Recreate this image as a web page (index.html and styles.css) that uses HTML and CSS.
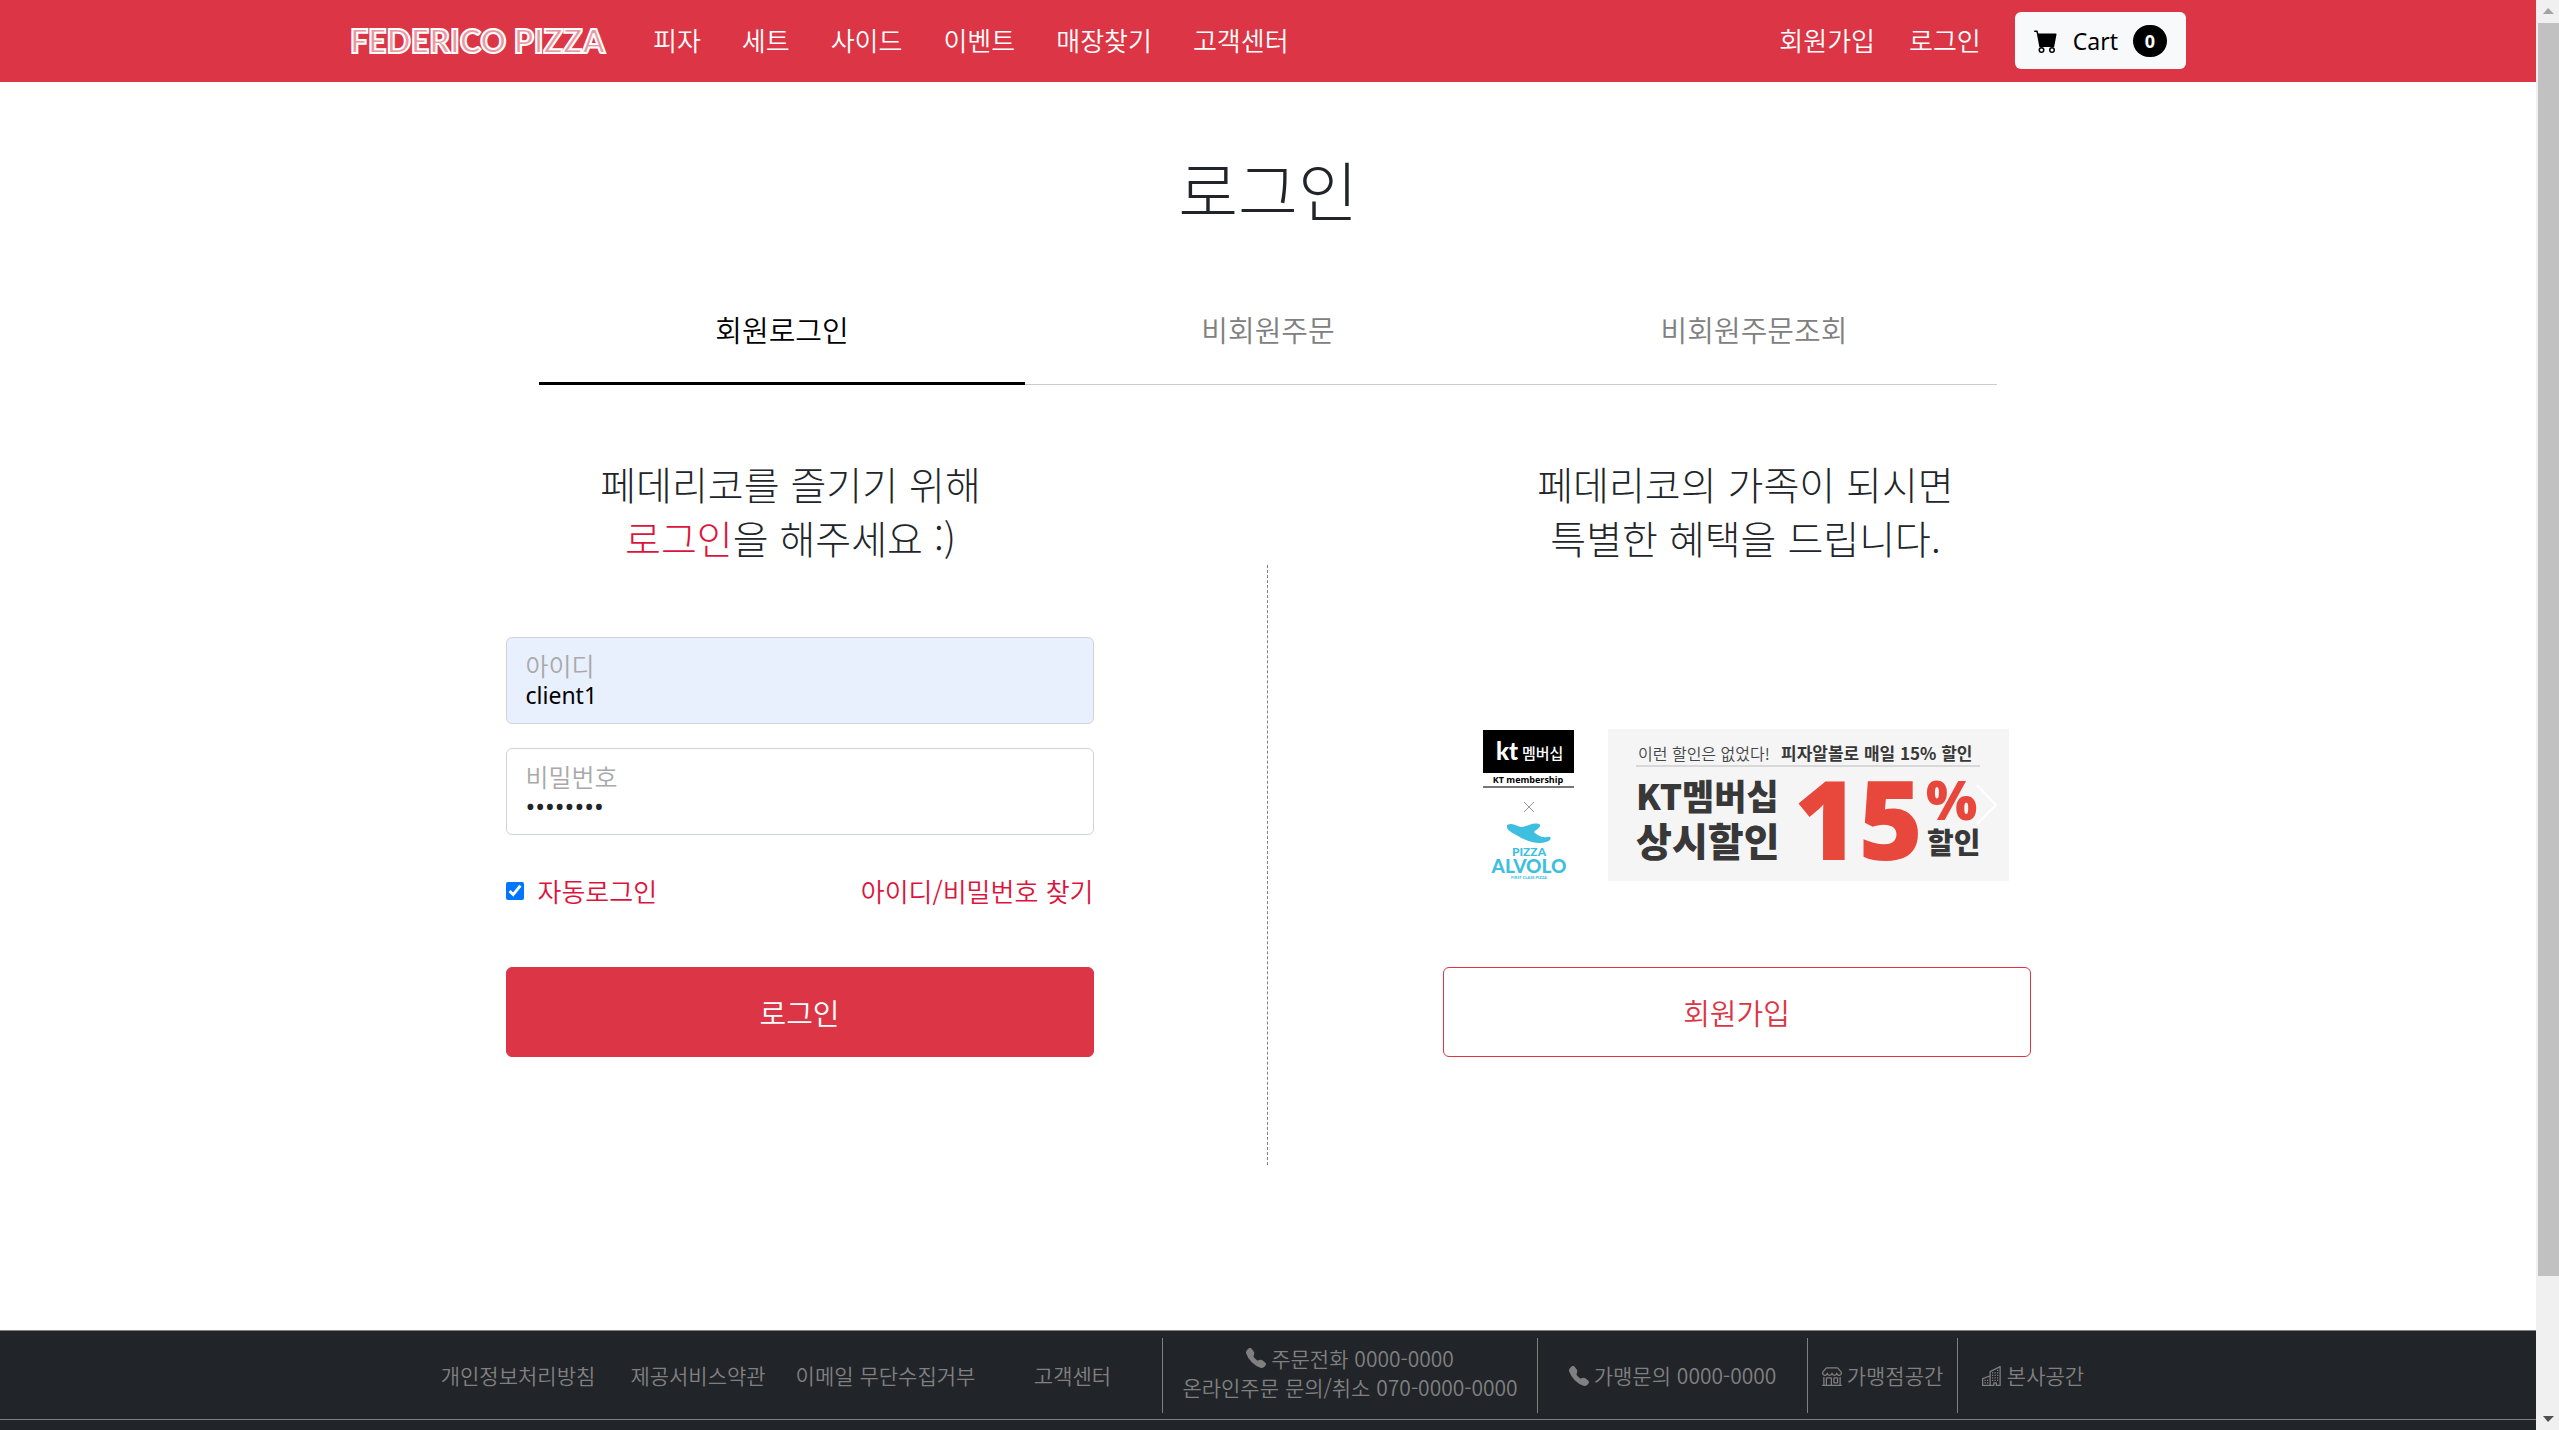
FILE: index.html
```html
<!DOCTYPE html>
<html lang="ko">
<head>
<meta charset="utf-8">
<title>FEDERICO PIZZA</title>
<link rel="stylesheet" href="styles.css">
</head>
<body>
<svg class="sprite" aria-hidden="true">
  <symbol id="phone" viewBox="0 0 16 16"><path fill-rule="evenodd" d="M1.885.511a1.745 1.745 0 0 1 2.61.163L6.29 2.98c.329.423.445.974.315 1.494l-.547 2.19a.678.678 0 0 0 .178.643l2.457 2.457a.678.678 0 0 0 .644.178l2.189-.547a1.745 1.745 0 0 1 1.494.315l2.306 1.794c.829.645.905 1.87.163 2.611l-1.034 1.034c-.74.74-1.846 1.065-2.877.702a18.634 18.634 0 0 1-7.01-4.42 18.634 18.634 0 0 1-4.42-7.009c-.362-1.03-.037-2.137.703-2.877L1.885.511z"/></symbol>
  <symbol id="shop" viewBox="0 0 16 16"><path d="M2.97 1.35A1 1 0 0 1 3.73 1h8.54a1 1 0 0 1 .76.35l2.609 3.044A1.5 1.5 0 0 1 16 5.37v.255a2.375 2.375 0 0 1-4.25 1.458A2.371 2.371 0 0 1 9.875 8 2.37 2.37 0 0 1 8 7.083 2.37 2.37 0 0 1 6.125 8a2.37 2.37 0 0 1-1.875-.917A2.375 2.375 0 0 1 0 5.625V5.37a1.5 1.5 0 0 1 .361-.976l2.61-3.045zm1.78 4.275a1.375 1.375 0 0 0 2.75 0 .5.5 0 0 1 1 0 1.375 1.375 0 0 0 2.75 0 .5.5 0 0 1 1 0 1.375 1.375 0 1 0 2.75 0V5.37a.5.5 0 0 0-.12-.325L12.27 2H3.73L1.12 5.045A.5.5 0 0 0 1 5.37v.255a1.375 1.375 0 0 0 2.75 0 .5.5 0 0 1 1 0zM1.5 8.5A.5.5 0 0 1 2 9v6h1v-5a1 1 0 0 1 1-1h3a1 1 0 0 1 1 1v5h6V9a.5.5 0 0 1 1 0v6h.5a.5.5 0 0 1 0 1H.5a.5.5 0 0 1 0-1H1V9a.5.5 0 0 1 .5-.5zM4 15h3v-5H4v5zm5-5a1 1 0 0 1 1-1h2a1 1 0 0 1 1 1v3a1 1 0 0 1-1 1h-2a1 1 0 0 1-1-1v-3zm3 0h-2v3h2v-3z"/></symbol>
  <symbol id="building" viewBox="0 0 16 16"><path fill-rule="evenodd" d="M14.763.075A.5.5 0 0 1 15 .5v15a.5.5 0 0 1-.5.5h-3a.5.5 0 0 1-.5-.5V14h-1v1.500a.5.5 0 0 1-.5.5h-9a.5.5 0 0 1-.5-.5V10a.5.5 0 0 1 .342-.474L6 7.640V4.500a.5.5 0 0 1 .276-.447l8-4a.5.5 0 0 1 .487.022zM6 8.694 1 10.360V15h5V8.694zM7 15h2v-1.500a.5.5 0 0 1 .5-.5h2a.5.5 0 0 1 .5.5V15h2V1.309l-7 3.500V15z"/><path d="M2 11h1v1H2v-1zm2 0h1v1H4v-1zm-2 2h1v1H2v-1zm2 0h1v1H4v-1zm4-4h1v1H8V9zm2 0h1v1h-1V9zm-2 2h1v1H8v-1zm2 0h1v1h-1v-1zm2-2h1v1h-1V9zm0 2h1v1h-1v-1zM8 7h1v1H8V7zm2 0h1v1h-1V7zm2 0h1v1h-1V7zM8 5h1v1H8V5zm2 0h1v1h-1V5zm2 0h1v1h-1V5zm0-2h1v1h-1V3z"/></symbol>
  <symbol id="cart" viewBox="0 0 16 16"><path d="M0 1.500A.5.5 0 0 1 .5 1H2a.5.5 0 0 1 .485.379L2.890 3H14.500a.5.5 0 0 1 .491.592l-1.500 8A.5.5 0 0 1 13 12H4a.5.5 0 0 1-.491-.408L2.010 3.607 1.610 2H.5a.5.5 0 0 1-.5-.5zM5 12a2 2 0 1 0 0 4 2 2 0 0 0 0-4zm7 0a2 2 0 1 0 0 4 2 2 0 0 0 0-4zm-7 1a1 1 0 1 1 0 2 1 1 0 0 1 0-2zm7 0a1 1 0 1 1 0 2 1 1 0 0 1 0-2z"/></symbol>
</svg>

<div class="page">
  <header class="topbar">
    <div class="topbar-inner">
      <a class="brand" href="#">FEDERICO PIZZA</a>
      <nav class="menu">
        <a href="#">피자</a><a href="#">세트</a><a href="#">사이드</a><a href="#">이벤트</a><a href="#">매장찾기</a><a href="#">고객센터</a>
      </nav>
      <nav class="account">
        <a href="#">회원가입</a><a href="#">로그인</a>
      </nav>
      <button class="cart" type="button"><svg class="cart-icon"><use href="#cart"/></svg>Cart<span class="badge">0</span></button>
    </div>
  </header>

  <main>
    <h1>로그인</h1>
    <div class="tabs">
      <button class="tab active" type="button">회원로그인</button>
      <button class="tab" type="button">비회원주문</button>
      <button class="tab" type="button">비회원주문조회</button>
    </div>

    <div class="columns">
      <section class="column">
        <h2 class="member-title">페데리코를 즐기기 위해<br><span class="accent">로그인</span>을 해주세요 :)</h2>
        <form class="login">
          <div class="field filled">
            <label for="user">아이디</label>
            <input id="user" type="text" value="client1">
          </div>
          <div class="field">
            <label for="pass">비밀번호</label>
            <input id="pass" type="password" value="password">
          </div>
          <div class="options">
            <input id="auto" type="checkbox" checked>
            <label for="auto">자동로그인</label>
            <a href="#">아이디/비밀번호 찾기</a>
          </div>
          <button class="action solid" type="button">로그인</button>
        </form>
      </section>
      <div class="divider"></div>
      <section class="column">
        <h2 class="join-title">페데리코의 가족이 되시면<br>특별한 혜택을 드립니다.</h2>
        <div class="promo">
          <svg class="banner" viewBox="0 0 527 152" role="img" aria-label="KT멤버십 상시할인 15%">
            <rect x="1" y="1" width="91" height="43"/>
            <text class="kt" x="14" y="31">kt</text>
            <text class="kt-sub" x="40" y="30">멤버십</text>
            <text class="kt-name" x="46" y="54">KT membership</text>
            <path class="rule" d="M1 58h91"/>
            <path class="thin" d="M42 73l10 10M52 73l-10 10"/>
            <path class="sky" d="M25 96c6-3 9 1 14 2 6 0 11-5 18-3 4 2-3 6-5 8 3 3 8 6 13 5 6-1 4 4-1 5-8 3-20-1-28-6-7-4-12-6-11-11z"/>
            <text class="sky pizza" x="47" y="127">PIZZA</text>
            <text class="sky alvolo" x="47" y="144">ALVOLO</text>
            <text class="sky tiny" x="47" y="150">FIRST CLASS PIZZA</text>
            <rect class="panel" x="126" width="401" height="152"/>
            <text class="lead" x="156" y="31">이런 할인은 없었다!</text>
            <text class="lead strong" x="299" y="31">피자알볼로 매일 15% 할인</text>
            <path class="hair" d="M154 37h344"/>
            <text class="big" x="154" y="81">KT멤버십</text>
            <text class="big wide" x="154" y="127">상시할인</text>
            <text class="red fifteen" x="312" y="131">15</text>
            <text class="red percent" x="444" y="91">%</text>
            <text class="sale" x="445" y="125">할인</text>
            <path class="chevron" d="M495 56l19 20-19 19"/>
          </svg>
        </div>
        <button class="action outline" type="button">회원가입</button>
      </section>
    </div>
  </main>

  <footer>
    <div class="links">
      <a href="#">개인정보처리방침</a>
      <a href="#">제공서비스약관</a>
      <a href="#">이메일 무단수집거부</a>
      <a href="#">고객센터</a>
      <div class="cell stacked"><span class="line"><svg class="icon"><use href="#phone"/></svg>주문전화 0000-0000</span><span class="line">온라인주문 문의/취소 070-0000-0000</span></div>
      <div class="cell"><span class="line"><svg class="icon"><use href="#phone"/></svg>가맹문의 0000-0000</span></div>
      <div class="cell"><a class="line" href="#"><svg class="icon"><use href="#shop"/></svg>가맹점공간</a></div>
      <div class="cell"><a class="line" href="#"><svg class="icon"><use href="#building"/></svg>본사공간</a></div>
    </div>
  </footer>
</div>

<div class="scrollbar" aria-hidden="true">
  <svg class="arrow" viewBox="0 0 23 23"><path fill="#a3a3a3" d="M7 14l5-6 6 6z"/></svg>
  <div class="track"><div class="thumb"></div></div>
  <svg class="arrow" viewBox="0 0 23 23"><path fill="#505050" d="M7 9h11l-6 6z"/></svg>
</div>
</body>
</html>
```
FILE: styles.css
```css
* { box-sizing: border-box; }

body {
  margin: 0;
  height: 100vh;
  display: grid;
  grid-template-columns: 1fr 23px;
  overflow: hidden;
  font-family: "Noto Sans CJK KR", "Noto Sans", sans-serif;
  font-weight: 350;
  font-size: 26px;
  color: #212529;
  background: #fff;
}
a { color: inherit; text-decoration: none; }
button, input { font: inherit; }
h1, h2 { margin: 0; font-weight: 300; text-align: center; }

.sprite { position: absolute; width: 0; height: 0; }
.page { height: 100vh; overflow: hidden; }

/* top bar */
.topbar { background: #dc3545; color: #fff; }
.topbar-inner {
  max-width: 1836px;
  height: 82px;
  margin: 0 auto;
  display: flex;
  align-items: center;
}
.brand {
  width: 303px;
  font-family: Lato, sans-serif;
  font-weight: 900;
  font-size: 32px;
  line-height: 40px;
  white-space: nowrap;
  color: #eb96a0;
  -webkit-text-stroke: 2px #fff;
}
.menu { display: flex; gap: 41px; flex: 1; padding-bottom: 4px; }
.account { display: flex; gap: 34px; margin-right: 34px; padding-bottom: 4px; }
.cart {
  display: flex;
  align-items: center;
  height: 57px;
  margin-bottom: 1px;
  padding: 0 19px;
  border: 0;
  border-radius: 6px;
  background: #f8f9fa;
  color: #000;
  font-family: "Noto Sans", sans-serif;
  font-weight: 400;
  font-size: 23px;
}
.cart-icon { width: 24px; height: 24px; margin-right: 15px; }
.badge {
  width: 34px;
  margin-left: 15px;
  border-radius: 16px;
  background: #000;
  color: #fff;
  font-weight: 700;
  font-size: 18px;
  line-height: 32px;
  text-align: center;
}

/* heading and tabs */
h1 { padding-top: 66px; font-size: 65px; line-height: 80px; }
.tabs {
  max-width: 1458px;
  margin: 47px auto 71px;
  display: grid;
  grid-template-columns: repeat(3, 1fr);
  box-shadow: inset 0 -1px #ccc;
}
.tab {
  height: 110px;
  padding: 0 0 2px;
  border: 0;
  background: none;
  color: gray;
  font-size: 29px;
}
.tab.active { color: #000; box-shadow: inset 0 -3px #000; }

/* two columns */
.columns {
  max-width: 1872px;
  margin: 0 auto 165px;
  display: grid;
  grid-template-columns: 1fr 2px 1fr;
}
.column { display: flex; flex-direction: column; align-items: center; }
.divider { height: 600px; margin-top: 109px; border-left: 1px dashed gray; }
h2 { font-size: 39px; line-height: 54px; }
.member-title { padding-right: 18px; }
.join-title { padding-left: 18px; }
.accent { color: crimson; }

.login { width: 588px; margin-top: 73px; }
.field {
  height: 87px;
  margin-bottom: 24px;
  padding: 12px 19px;
  border: 1px solid #ced4da;
  border-radius: 6px;
  display: flex;
  flex-direction: column;
}
.field label { font-size: 25px; line-height: 30px; color: #a9a9a9; }
.field input {
  height: 30px;
  padding: 0;
  border: 0;
  outline: 0;
  background: none;
  font-family: "Noto Sans", sans-serif;
  font-weight: 400;
  font-size: 23px;
  color: #212529;
}
.field input[type="password"] { font-size: 26px; }
.filled { background: #e8f0fe; }
.filled input[type="text"] { color: #000; }
.options {
  display: flex;
  align-items: center;
  margin: 36px 0 56px;
  line-height: 40px;
  color: crimson;
}
.options input { width: 18px; height: 18px; margin: 0 14px 0 0; }
.options a { margin-left: auto; }

.action {
  width: 588px;
  height: 90px;
  border: 1px solid #dc3545;
  border-radius: 6px;
  font-size: 29px;
}
.solid { background: #dc3545; color: #fff; }
.outline { background: #fff; color: #dc3545; }

/* promotion banner */
.promo { width: 545px; padding-left: 18px; margin: 165px 0 86px; }
.banner { display: block; width: 527px; height: 152px; }
.kt { font: 900 24px Lato, sans-serif; fill: #fff; }
.kt-sub { font-size: 15px; font-weight: 500; fill: #fff; }
.kt-name { font: 700 9px "Open Sans", sans-serif; text-anchor: middle; }
.rule { stroke: #777; stroke-width: 2; }
.thin { stroke: #999; fill: none; }
.sky { fill: #3fbfe0; }
.pizza, .alvolo, .tiny { font-family: Lato, sans-serif; font-weight: 900; text-anchor: middle; }
.pizza { font-size: 12px; }
.alvolo { font-size: 19px; }
.tiny { font-size: 4px; }
.panel { fill: #f5f5f5; }
.lead { font-size: 16px; fill: #444; }
.strong { font-size: 17px; font-weight: 700; fill: #383838; }
.hair { stroke: #bbb; }
.big { font-size: 35px; font-weight: 900; fill: #383838; }
.wide { font-size: 39px; }
.red { fill: #e8473c; font-family: "Open Sans", sans-serif; font-weight: 800; }
.fifteen { font-size: 110px; }
.percent { font-size: 54px; }
.sale { font-size: 29px; font-weight: 900; fill: #383838; }
.chevron { fill: none; stroke: #fff; stroke-width: 2; }

/* footer */
footer {
  min-height: 250px;
  border-top: 1px solid gray;
  background: #212529;
  color: gray;
  font-size: 21px;
  line-height: 29px;
}
.links {
  height: 89px;
  padding: 7px calc(50% - 840px);
  border-bottom: 1px solid gray;
  display: grid;
  grid-template-columns: 180fr 180fr 195fr 179fr 375fr 270fr 150fr 151fr;
  align-items: center;
  text-align: center;
  white-space: nowrap;
}
.cell {
  height: 75px;
  border-left: 1px solid gray;
  display: flex;
  flex-direction: column;
  justify-content: center;
  align-items: center;
}
.stacked { padding-bottom: 6px; }
.line { display: flex; align-items: center; gap: 5px; }
.icon { width: 20px; height: 20px; fill: gray; }

/* scroll bar */
.scrollbar { display: flex; flex-direction: column; background: #f0f0f0; }
.arrow { width: 23px; height: 23px; }
.track {
  flex: 1;
  padding-left: 2px;
  display: grid;
  grid-template-rows: 181fr 19fr;
}
.thumb { background: #c1c1c1; }
```
